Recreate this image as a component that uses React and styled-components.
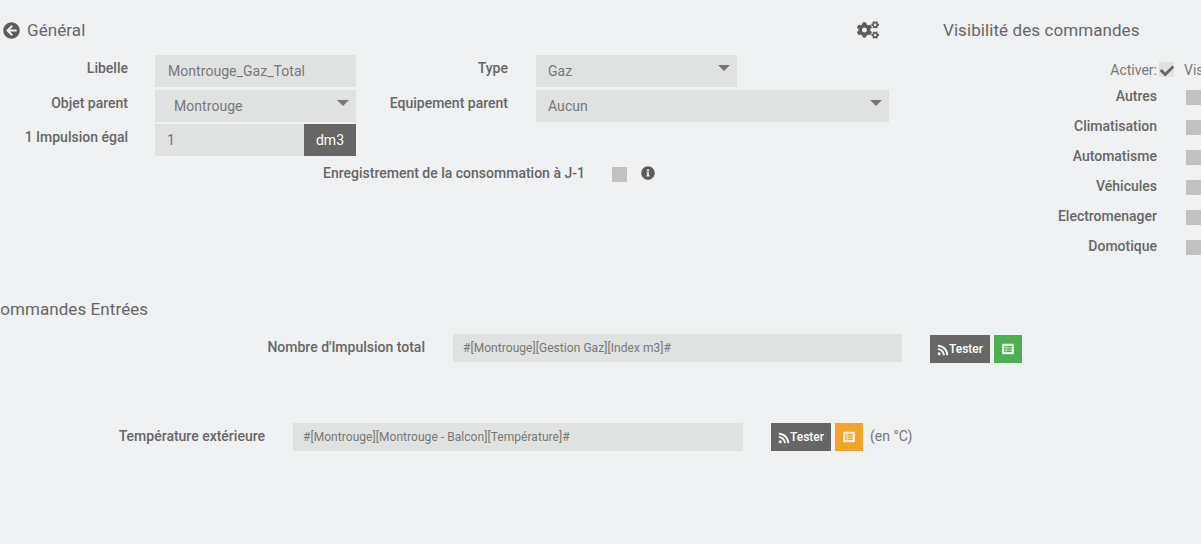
import React from "react";
import styled, { createGlobalStyle } from "styled-components";
import { FaArrowCircleLeft, FaCogs, FaInfoCircle, FaCheck, FaRss, FaListAlt } from "react-icons/fa";

const GlobalStyle = createGlobalStyle`
  html, body {
    margin: 0;
    padding: 0;
    height: 100%;
    overflow: hidden;
    background: #f0f1f3;
  }
  body {
    font-family: Roboto, "Liberation Sans", sans-serif;
    color: #666;
  }
`;

const Page = styled.div`
  width: 1201px;
  height: 544px;
  overflow: hidden;
  background: #f0f1f3;
`;

const TopSection = styled.section`
  display: flex;
  height: 292px;
`;

const GeneralPanel = styled.div`
  width: 943px;
  flex: none;
`;

const VisibilityPanel = styled.div`
  flex: 1;
  min-width: 0;
  overflow: hidden;
`;

const PanelHeader = styled.div`
  display: flex;
  align-items: center;
  height: 20px;
  margin-top: 20px;
  margin-bottom: 15px;
  width: 879px;
`;

const BackIcon = styled(FaArrowCircleLeft)`
  font-size: 17px;
  color: #5c5c5c;
  margin-left: 3px;
  margin-right: 7px;
`;

const Heading = styled.h3`
  margin: 0;
  font-size: 17px;
  line-height: 20px;
  font-weight: 400;
  letter-spacing: 0.08px;
  color: #666;
  white-space: nowrap;
`;

const SettingsIcon = styled(FaCogs)`
  margin-left: auto;
  font-size: 22px;
  color: #5c5c5c;
`;

const FormRow = styled.div`
  display: flex;
  height: 32px;
  margin-bottom: ${(p) => p.$gap || 0}px;
`;

const Label = styled.label`
  flex: none;
  width: ${(p) => p.$width}px;
  padding-top: 4px;
  font-size: 14px;
  line-height: 18px;
  font-weight: 500;
  color: #666;
  text-align: right;
  white-space: nowrap;
`;

const Field = styled.div`
  flex: none;
  display: flex;
  align-items: center;
  position: relative;
  box-sizing: border-box;
  width: ${(p) => p.$width}px;
  margin-left: ${(p) => p.$offset}px;
  padding-left: ${(p) => p.$pad || 12}px;
  background: #e0e2e1;
  font-size: 14px;
  letter-spacing: 0.05px;
  color: #777;
`;

const Caret = styled.span`
  position: absolute;
  right: 7px;
  top: 10px;
  border-left: 6px solid transparent;
  border-right: 6px solid transparent;
  border-top: 6px solid #777;
`;

const UnitGroup = styled.div`
  flex: none;
  display: flex;
  width: 201px;
  margin-left: 27px;
`;

const UnitField = styled.div`
  flex: 1;
  display: flex;
  align-items: center;
  padding-left: 12px;
  background: #e0e2e1;
  font-size: 14px;
  color: #777;
`;

const Unit = styled.div`
  width: 52px;
  display: flex;
  align-items: center;
  justify-content: center;
  background: #666;
  color: #fff;
  font-size: 14px;
`;

const ConsumptionRow = styled.div`
  display: flex;
  align-items: center;
  height: 18px;
  margin-top: 8px;
  padding-left: 323px;
`;

const ConsumptionLabel = styled.span`
  width: 261px;
  font-size: 14px;
  font-weight: 500;
  color: #666;
  white-space: nowrap;
`;

const Box = styled.span`
  flex: none;
  display: flex;
  align-items: center;
  justify-content: center;
  width: 15px;
  height: 15px;
  background: ${(p) => (p.$light ? "#e0e2e1" : "#c1c1c1")};
`;

const ConsumptionBox = styled(Box)`
  margin-left: 28px;
  margin-top: 2px;
`;

const InfoIcon = styled(FaInfoCircle)`
  margin-left: 14px;
  font-size: 14px;
  color: #5c5c5c;
`;

const ActivateRow = styled.div`
  display: flex;
  align-items: center;
  height: 15px;
  margin-top: 22px;
  margin-bottom: 13px;
  font-size: 14px;
  color: #777;
  white-space: nowrap;
`;

const ActivateLabel = styled.span`
  flex: none;
  width: 214px;
  text-align: right;
`;

const ActivateBox = styled(Box)`
  margin-left: 2px;
`;

const CheckIcon = styled(FaCheck)`
  font-size: 14px;
  color: #666;
  margin-top: 3px;
`;

const ActivateHint = styled.span`
  flex: none;
  margin-left: 10px;
`;

const VisibilityRow = styled.div`
  display: flex;
  align-items: center;
  height: 15px;
  margin-bottom: 15px;
`;

const VisibilityLabel = styled.span`
  flex: none;
  width: 214px;
  margin-top: -3px;
  font-size: 14px;
  font-weight: 500;
  color: #666;
  text-align: right;
  white-space: nowrap;
`;

const VisibilityBox = styled(Box)`
  margin-left: 29px;
`;

const CommandsHeading = styled(Heading)`
  margin-left: -11px;
  margin-top: 7px;
  margin-bottom: 15px;
`;

const CommandRow = styled.div`
  display: flex;
  height: 29px;
  margin-bottom: ${(p) => p.$gap || 0}px;
`;

const CommandLabel = styled.label`
  flex: none;
  width: ${(p) => p.$width}px;
  padding-top: 4px;
  font-size: 14px;
  line-height: 18px;
  font-weight: 500;
  color: #666;
  text-align: right;
  white-space: nowrap;
`;

const CommandInput = styled.div`
  flex: none;
  display: flex;
  align-items: center;
  box-sizing: border-box;
  width: ${(p) => p.$width}px;
  height: 28px;
  margin-left: 28px;
  padding-left: 10px;
  background: #e0e2e1;
  font-size: 12px;
  letter-spacing: 0.05px;
  color: #777;
  white-space: nowrap;
`;

const Actions = styled.div`
  display: flex;
  gap: 4px;
  height: 28px;
  margin-left: 28px;
  margin-top: ${(p) => p.$shift || 0}px;
`;

const TestButton = styled.button`
  display: flex;
  align-items: center;
  justify-content: center;
  width: 60px;
  padding: 0;
  border: 0;
  background: #666;
  color: #fff;
  font-family: inherit;
  font-size: 12px;
  font-weight: 500;
`;

const RssIcon = styled(FaRss)`
  font-size: 12px;
  margin-top: 2px;
`;

const ConfigButton = styled.button`
  display: flex;
  align-items: center;
  justify-content: center;
  width: 28px;
  padding: 0;
  border: 0;
  background: ${(p) => p.$color};
  color: #fff;
  font-size: 12px;
`;

const PaleList = styled(FaListAlt)`
  opacity: 0.85;
`;

const Suffix = styled.span`
  margin-left: 7px;
  line-height: 27px;
  font-size: 14px;
  color: #777;
`;

const categories = ["Autres", "Climatisation", "Automatisme", "Véhicules", "Electromenager", "Domotique"];

export default function App() {
  return (
    <Page>
      <GlobalStyle />
      <TopSection>
        <GeneralPanel>
          <PanelHeader>
            <BackIcon />
            <Heading>Général</Heading>
            <SettingsIcon />
          </PanelHeader>
          <FormRow $gap={3}>
            <Label $width={128}>Libelle</Label>
            <Field $width={201} $offset={27} $pad={13}>Montrouge_Gaz_Total</Field>
            <Label $width={152}>Type</Label>
            <Field $width={201} $offset={28}>
              Gaz
              <Caret />
            </Field>
          </FormRow>
          <FormRow $gap={2}>
            <Label $width={128}>Objet parent</Label>
            <Field $width={201} $offset={27} $pad={19}>
              Montrouge
              <Caret />
            </Field>
            <Label $width={152}>Equipement parent</Label>
            <Field $width={353} $offset={28}>
              Aucun
              <Caret />
            </Field>
          </FormRow>
          <FormRow>
            <Label $width={128}>1 Impulsion égal</Label>
            <UnitGroup>
              <UnitField>1</UnitField>
              <Unit>dm3</Unit>
            </UnitGroup>
          </FormRow>
          <ConsumptionRow>
            <ConsumptionLabel>Enregistrement de la consommation à J-1</ConsumptionLabel>
            <ConsumptionBox />
            <InfoIcon />
          </ConsumptionRow>
        </GeneralPanel>
        <VisibilityPanel>
          <PanelHeader>
            <Heading>Visibilité des commandes</Heading>
          </PanelHeader>
          <ActivateRow>
            <ActivateLabel>Activer:</ActivateLabel>
            <ActivateBox $light>
              <CheckIcon />
            </ActivateBox>
            <ActivateHint>Visible</ActivateHint>
          </ActivateRow>
          {categories.map((name) => (
            <VisibilityRow key={name}>
              <VisibilityLabel>{name}</VisibilityLabel>
              <VisibilityBox />
            </VisibilityRow>
          ))}
        </VisibilityPanel>
      </TopSection>
      <section>
        <CommandsHeading>Commandes Entrées</CommandsHeading>
        <CommandRow $gap={60}>
          <CommandLabel $width={425}>Nombre d'Impulsion total</CommandLabel>
          <CommandInput $width={449}>#[Montrouge][Gestion Gaz][Index m3]#</CommandInput>
          <Actions $shift={1}>
            <TestButton>
              <RssIcon />
              Tester
            </TestButton>
            <ConfigButton $color="#4caf50">
              <PaleList />
            </ConfigButton>
          </Actions>
        </CommandRow>
        <CommandRow>
          <CommandLabel $width={265}>Température extérieure</CommandLabel>
          <CommandInput $width={450}>#[Montrouge][Montrouge - Balcon][Température]#</CommandInput>
          <Actions>
            <TestButton>
              <RssIcon />
              Tester
            </TestButton>
            <ConfigButton $color="#f2a428">
              <PaleList />
            </ConfigButton>
          </Actions>
          <Suffix>(en °C)</Suffix>
        </CommandRow>
      </section>
    </Page>
  );
}
